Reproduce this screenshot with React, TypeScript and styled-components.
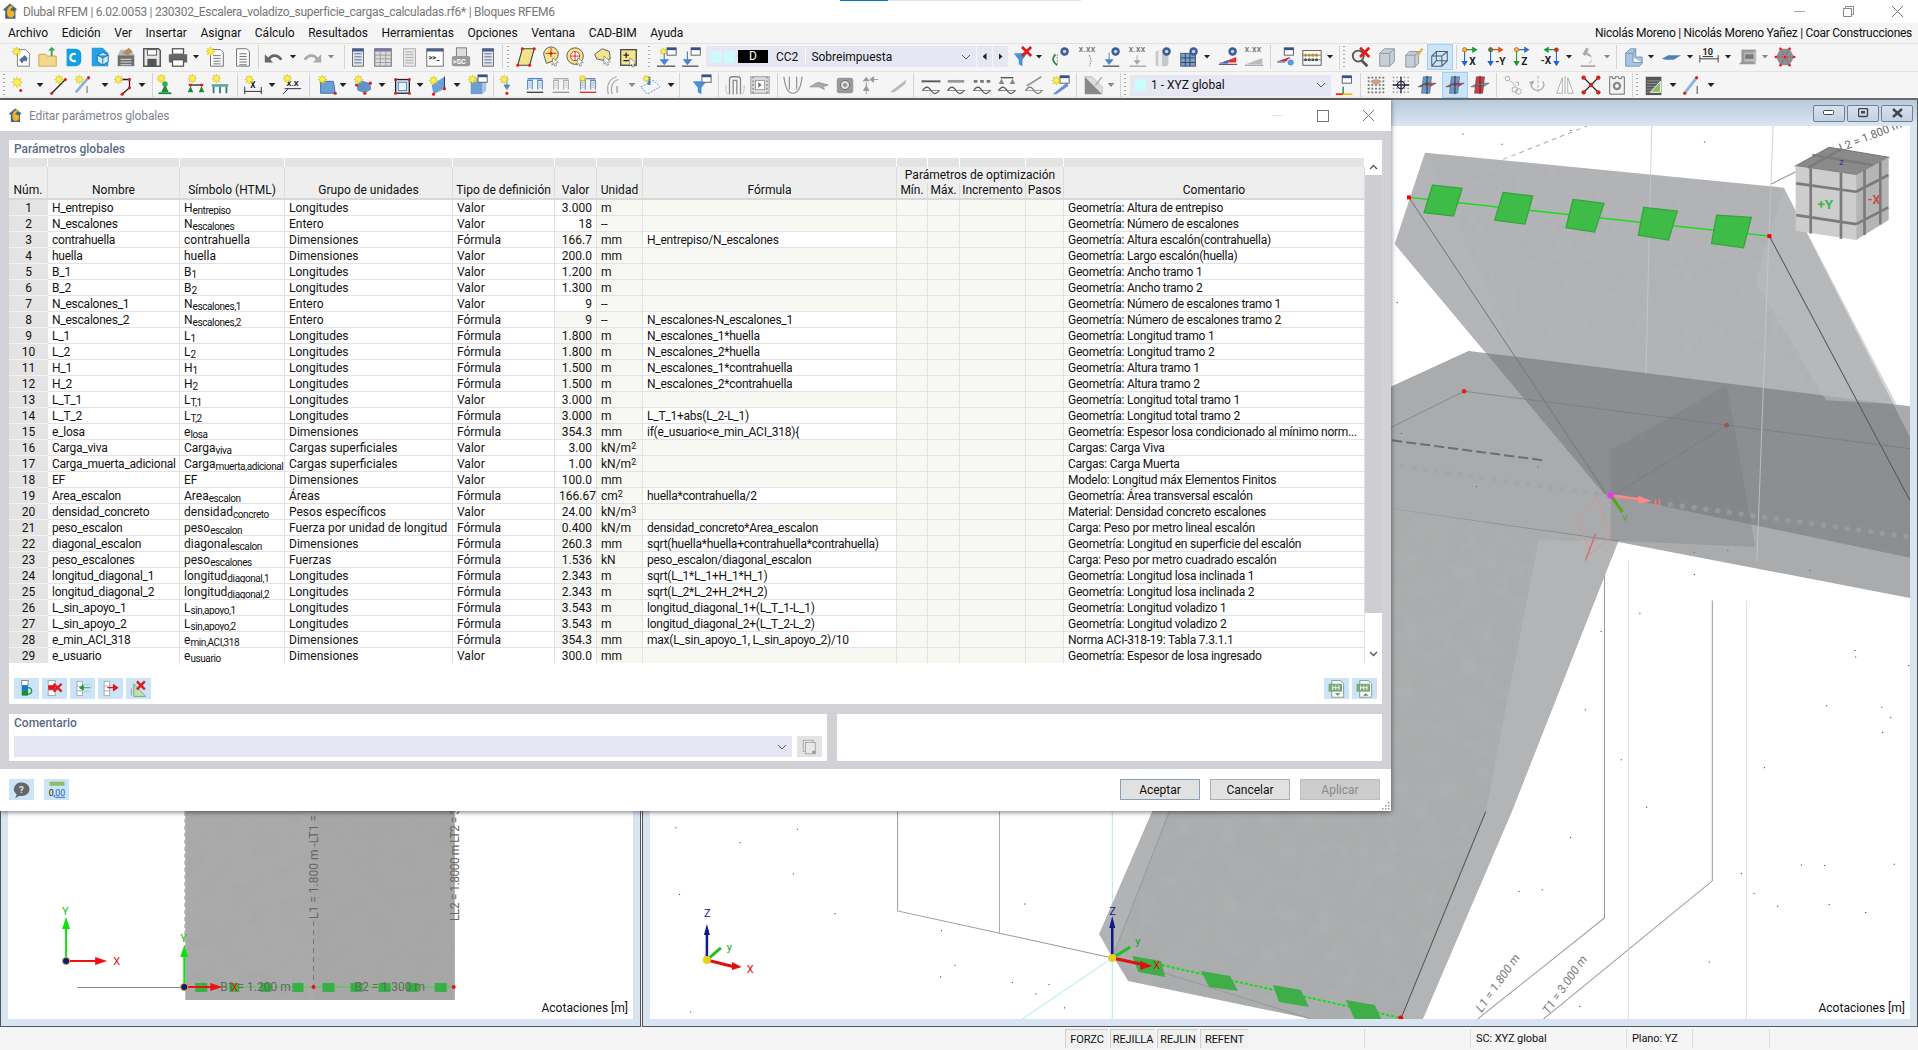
import React from "react";
import styled, { createGlobalStyle } from "styled-components";

const Global = createGlobalStyle`
  html, body { margin: 0; padding: 0; background: #fff; }
  body { font-family: Roboto, "Liberation Sans", sans-serif; font-size: 12px; color: #111; }
`;

const Burst = ({ x, y, r = 5 }: { x: number; y: number; r?: number }) => {
  const pts: string[] = [];
  for (let i = 0; i < 16; i++) {
    const a = (i * Math.PI) / 8;
    const q = i % 2 === 0 ? r : r * 0.5;
    pts.push(`${x + q * Math.cos(a)},${y + q * Math.sin(a)}`);
  }
  return <polygon points={pts.join(" ")} fill="#fff04a" stroke="#c9b200" strokeWidth=".5" />;
};
const Rd = ({ x, y, r = 1.7 }: { x: number; y: number; r?: number }) => <circle cx={x} cy={y} r={r} fill="#e21c1c" />;
const Lines = ({ x, y, w, n, c = "#777", d = 3 }: { x: number; y: number; w: number; n: number; c?: string; d?: number }) => (
  <>
    {Array.from({ length: n }, (_, i) => (
      <path key={i} d={`M${x} ${y + i * d + 0.5}h${w}`} stroke={c} />
    ))}
  </>
);
const Wave = ({ c = "#555" }: { c?: string }) => (
  <>
    <path d="M3 18c3-5 6-5 9 0s6 4 9 0" fill="none" stroke={c} strokeWidth="1.3" />
    <path d="M2 18h20" stroke={c} strokeWidth=".7" />
  </>
);
const Ax = ({ a, b, l }: { a: string; b: string; l: string }) => (
  <>
    <path d="M4 4h13M14 1.5l4 2.5-4 2.5z" stroke={a} fill={a} strokeWidth="1.2" />
    <path d="M5 4v16M2.5 17l2.5 4 2.5-4z" stroke={b} fill={b} strokeWidth="1.2" />
    <circle cx="5" cy="4" r="2.4" fill={a === "#e2541c" ? "#1e9a3c" : "#f0c020"} stroke="#c23" strokeWidth=".6" />
    <text x="10" y="21" fontSize="11" fontWeight="700" fontFamily="Roboto" fill="#222">{l}</text>
  </>
);
const Eye = () => (
  <>
    <circle cx="17" cy="6" r="4.6" fill="#3c5a94" />
    <circle cx="17" cy="6" r="2" fill="#bcd0f0" />
  </>
);
const XXX = () => <text x="2" y="7" fontSize="7.5" fontWeight="700" fontFamily="Roboto" letterSpacing=".4" fill="#777">X.XX</text>;
const Cross = ({ x = 17, y = 6 }: { x?: number; y?: number }) => (
  <path d={`M${x - 5} ${y - 5}l10 10M${x + 5} ${y - 5}l-10 10`} stroke="#e01b1b" strokeWidth="3" />
);
const WinMini = ({ x = 12, y = 2 }: { x?: number; y?: number }) => (
  <>
    <rect x={x} y={y} width="10" height="8" fill="#fff" stroke="#556" />
    <rect x={x} y={y} width="10" height="2.5" fill="#2f4f8f" />
  </>
);
const Funnel = ({ c = "#4a90d9" }: { c?: string }) => <path d="M3 8h15l-5.5 7v7l-4-2v-5z" fill={c} />;
const ColList = ({ c = "#4a6fa5", head = "#3f5f9a" }: { c?: string; head?: string }) => (
  <>
    <rect x="6" y="3" width="12" height="19" fill="#e4e4e4" stroke="#666" />
    <rect x="6" y="3" width="12" height="3" fill={head} />
    <Lines x={8} y={8} w={8} n={4} c={c} d={3.3} />
  </>
);
const Plane = ({ a, b, c }: { a: string; b: string; c: string }) => (
  <>
    <path d="M8 3h9l-1 9H7z" fill={a} stroke="#345" strokeWidth=".5" />
    <path d="M2 14l8-4h12l-7 4z" fill={b} stroke="#345" strokeWidth=".5" />
    <path d="M7 12h9l-1 9H6z" fill={c} stroke="#345" strokeWidth=".5" />
    <path d="M12 2v20" stroke="#233" />
  </>
);
const Frame = ({ c, d = "#444" }: { c: string; d?: string }) => (
  <>
    <path d="M4 17V7h5v10M15 17V7h5v10M4 5h16" stroke={c} fill="none" strokeWidth="1.2" />
    <path d="M3 20h18" stroke={d} strokeWidth="1.5" />
    <path d="M6.5 9v6M17.5 9v6" stroke={c} strokeDasharray="1.5 1" />
  </>
);

const icons: Record<string, React.ReactNode> = {
  newDoc: (<><path d="M7 4h9l4 4v14H7z" fill="#fff" stroke="#777" /><path d="M9 15l6-5 3 3-1 4-3-1-2 3z" fill="#4d6f9c" /><Burst x={6} y={6} /></>),
  folder: (<><path d="M2 9h7l2 2h10v11H2z" fill="#f3d98a" stroke="#c9a54a" /><path d="M15 11V5h-3l4-4 4 4h-3v6z" fill="#2fa84a" /></>),
  dblue: (<><path d="M5 3h10a6 6 0 0 1 6 6v7a6 6 0 0 1-6 6H5z" fill="#13a0e2" /><path d="M15 9a4 4 0 1 0 0 7" fill="none" stroke="#fff" strokeWidth="2.4" /></>),
  cubeDoc: (<><path d="M3 2h12l6 6v14H3z" fill="#26a2e4" /><path d="M9 10l6-3 6 3v7l-6 4-6-4z M9 10l6 3 6-3M15 13v8" fill="#cdeafa" stroke="#1a6da8" /></>),
  model: (<><rect x="3" y="10" width="18" height="12" fill="#6d6d6d" /><path d="M3 10l3-6h12l3 6z" fill="#b9b9b9" /><path d="M8 8l7-6 4 4-5 4z" fill="#b98a5a" /><Lines x={6} y={14} w={12} n={3} c="#eee" /></>),
  save: (<><path d="M3 3h16l2 2v17H3z" fill="#e8e8e8" stroke="#555" strokeWidth="1.6" /><rect x="7" y="4" width="10" height="6" fill="#fff" stroke="#555" /><rect x="7" y="14" width="10" height="8" fill="#555" /></>),
  print: (<><rect x="6" y="3" width="12" height="6" fill="#fff" stroke="#555" strokeWidth="1.4" /><rect x="2" y="9" width="20" height="9" fill="#666" /><rect x="6" y="15" width="12" height="7" fill="#fff" stroke="#555" strokeWidth="1.4" /></>),
  newList: (<><path d="M6 4h11l3 3v15H6z" fill="#fff" stroke="#666" /><Lines x={9} y={10} w={8} n={4} c="#666" /><Burst x={6} y={6} /></>),
  list: (<><path d="M5 3h11l3 3v16H5z" fill="#fff" stroke="#666" /><Lines x={8} y={8} w={8} n={5} c="#666" /></>),
  undo: (<><path d="M6 15c3-6 10-6 14 0" fill="none" stroke="#666" strokeWidth="3" /><path d="M2 9v9h9z" fill="#666" /></>),
  redo: (<><path d="M18 15c-3-6-10-6-14 0" fill="none" stroke="#aaa" strokeWidth="3" /><path d="M22 9v9h-9z" fill="#aaa" /></>),
  colList: <ColList />,
  table: (<><rect x="3" y="3" width="18" height="19" fill="#ddd" stroke="#666" /><rect x="3" y="3" width="18" height="3" fill="#77a" /><path d="M3 10h18M3 14h18M3 18h18M9 6v16M15 6v16" stroke="#999" /></>),
  grayList: (<><rect x="6" y="3" width="13" height="19" fill="#e8e8e8" stroke="#aaa" /><Lines x={8} y={6} w={9} n={5} c="#aaa" /></>),
  console: (<><rect x="3" y="3" width="18" height="19" fill="#fff" stroke="#666" /><rect x="3" y="3" width="18" height="3" fill="#46608f" /><text x="5" y="15" fontSize="8" fontWeight="700" fontFamily="Roboto" fill="#222">{">>_"}</text></>),
  sc: (<><rect x="7" y="2" width="11" height="10" fill="#ddd" stroke="#777" /><rect x="2" y="11" width="20" height="11" rx="2" fill="#999" /><text x="3" y="20" fontSize="8" fontWeight="700" fontFamily="Roboto" fill="#fff">{">SC"}</text></>),
  surfYellow: (<><path d="M8 3h13l-5 18H3z" fill="#f2e28a" stroke="#444" strokeWidth="1.2" /><Rd x={8} y={3} /><Rd x={21} y={3} /><Rd x={3} y={21} /><Rd x={16} y={21} /></>),
  target1: (<><path d="M4 9a8 8 0 1 1 8 8l-5 2z" fill="#f3e58e" stroke="#555" /><path d="M12 2v10M6 8h12" stroke="#e01b1b" /><Rd x={12} y={8} /><path d="M14 13l6 5-3 .5 1 3-2 .5-1-3-2 2z" fill="#fff" stroke="#555" strokeWidth=".6" /></>),
  target2: (<><circle cx="11" cy="11" r="9" fill="#f3e58e" stroke="#555" /><circle cx="11" cy="11" r="5" fill="#fff" stroke="#c33" /><path d="M11 6v10M6 11h10" stroke="#e01b1b" /><path d="M14 13l6 5-3 .5 1 3-2 .5-1-3-2 2z" fill="#fff" stroke="#555" strokeWidth=".6" /></>),
  blob: (<><path d="M3 9l8-6 8 3 1 8-6 2-9-2z" fill="#f3e58e" stroke="#555" /><path d="M13 11l7 6-3 .5 1 3-2 .5-1-3-2 2z" fill="#fff" stroke="#555" strokeWidth=".6" /></>),
  plusBox: (<><rect x="4" y="4" width="17" height="17" fill="#f3e58e" stroke="#444" strokeWidth="1.4" /><path d="M7 10h6M10 7v6M7 16h6" stroke="#222" strokeWidth="1.3" /><path d="M14 13l7 6-3 .5 1 3-2 .5-1-3-2 2z" fill="#fff" stroke="#555" strokeWidth=".6" /></>),
  loadNew: (<><path d="M9 6v13M5 15l4 5 4-5z" stroke="#4a86c8" fill="#4a86c8" strokeWidth="1.3" /><path d="M1 22h20" stroke="#444" strokeWidth="1.3" /><WinMini x={12} y={2} /><Burst x={8} y={6} r={4} /></>),
  loadWin: (<><path d="M7 6v13M3 15l4 5 4-5z" stroke="#4a86c8" fill="#4a86c8" strokeWidth="1.3" /><path d="M1 22h18" stroke="#444" strokeWidth="1.3" /><WinMini x={11} y={2} /></>),
  filterX: (<><Funnel /><Cross /></>),
  eyeC: (<><path d="M7 9c-4 5-3 9 2 12" fill="none" stroke="#2a8a50" strokeWidth="2" /><path d="M9 9v12" stroke="#888" strokeDasharray="2 1" /><Eye /></>),
  xxxC: (<><XXX /><path d="M13 10c3 4 3 8 0 12" fill="none" stroke="#999" strokeDasharray="2 1" strokeWidth="1.2" /></>),
  eyeLoad: (<><path d="M10 7v12M6 15l4 5 4-5z" stroke="#4a86c8" fill="#4a86c8" /><path d="M3 22h18" stroke="#444" strokeWidth="1.3" /><Eye /></>),
  xxxLoad: (<><XXX /><path d="M11 10v9M8 16l3 4 3-4z" stroke="#aaa" fill="#aaa" /><path d="M3 22h18" stroke="#999" strokeWidth="1.3" /></>),
  eyeCyl: (<><rect x="5" y="5" width="14" height="17" rx="3" fill="#c8c8c8" /><rect x="8" y="5" width="4" height="17" fill="#eee" /><Eye /></>),
  eyeTable: (<><rect x="3" y="8" width="16" height="14" fill="#7aa0cc" stroke="#456" /><path d="M3 13h16M3 18h16M8 8v14M13 8v14" stroke="#345" /><Eye /></>),
  eyeBar: (<><path d="M3 19l18-7v6H3z" fill="#d33" /><path d="M3 19l9-3.5v3.5z" fill="#36c" /><path d="M2 20h20" stroke="#333" /><Eye /></>),
  xxxBar: (<><XXX /><path d="M3 20l18-7v7z" fill="#bbb" /><path d="M2 21h20" stroke="#888" /></>),
  winGear: (<><path d="M1 17l14-5v5z" fill="#c33" /><path d="M1 17h9v1H1z" fill="#36c" /><WinMini x={9} y={2} /><circle cx="16" cy="18" r="4" fill="#5a9be0" stroke="#fff" /></>),
  abacus: (<><rect x="2" y="5" width="20" height="16" fill="#fff" stroke="#555" /><path d="M2 10h20M2 15h20" stroke="#777" />{[5, 9, 13, 17].map((x) => <circle key={x} cx={x} cy="10" r="1.7" fill="#c88a2a" />)}{[5, 9, 13, 17].map((x) => <circle key={x} cx={x} cy="15" r="1.7" fill="#456" />)}</>),
  zoomX: (<><circle cx="9" cy="11" r="6" fill="#eee" stroke="#555" strokeWidth="2" /><path d="M13 16l6 6" stroke="#555" strokeWidth="3" /><Cross x={16} y={7} /></>),
  box: (<path d="M4 8l5-5h11v14l-5 5H4zM4 8h11v14M15 8l5-5" fill="#c7ced8" stroke="#8b94a0" />),
  boxPen: (<><path d="M3 10l4-4h10v13l-4 4H3zM3 10h10v13M13 10l4-4" fill="#c7ced8" stroke="#8b94a0" /><path d="M15 10l5-8 2 1.5-5 8z" fill="#e8b24a" /></>),
  boxWire: (<path d="M3 11l5-5h12v10l-6 6H3zM3 11h11v11M14 11l6-5M8 6v10h12M3 22l5-6" fill="none" stroke="#4e5d6e" strokeWidth="1.1" />),
  axX: <Ax a="#1e9a3c" b="#2266cc" l="X" />,
  axY: <Ax a="#e2541c" b="#2266cc" l="-Y" />,
  axZ: <Ax a="#2f6fcc" b="#1e9a3c" l="Z" />,
  axNX: (<><path d="M20 4H7M10 1.5L6 4l4 2.5z" stroke="#1e9a3c" fill="#1e9a3c" strokeWidth="1.2" /><path d="M19 4v16M16.5 17l2.5 4 2.5-4z" stroke="#2266cc" fill="#2266cc" strokeWidth="1.2" /><circle cx="19" cy="4" r="2.5" fill="#c8321c" /><text x="2" y="20" fontSize="11" fontWeight="700" fontFamily="Roboto" fill="#222">-X</text></>),
  microscope: (<path d="M4 21h16v2H4zM12 19a6 6 0 0 0 2-10l-3-2 2-4-3-1-4 7 3 2 1-2 2 2a3 3 0 0 1 0 8z" fill="#aaa" />),
  solidL: (<path d="M4 8l5-5h6v9h7v7l-3 3H4zM4 8h8v10h10M12 8l3-5" fill="#a8c3e4" stroke="#7c93b0" />),
  plane: (<path d="M2 14l7-4h14l-8 5H6z" fill="#4c80b8" />),
  dim10: (<><text x="5" y="10" fontSize="10" fontWeight="700" fontFamily="Roboto" fill="#222" textDecoration="underline">10</text><path d="M2 14h20M2 10v8M22 10v8" stroke="#333" /></>),
  beam: (<><path d="M5 4h16v14H5z" fill="#bbb" /><path d="M5 4h16l-3 3H8v10h10l3 3H2l3-3z" fill="#999" /><rect x="9" y="9" width="9" height="5" fill="#777" /></>),
  mesh: (<><path d="M7 3l10 0 5 9-5 9H7l-5-9z" fill="#8b8f95" /><path d="M7 3l10 18M17 3L7 21M2 12h20" stroke="#c33" strokeDasharray="1.5 1.5" />{[[7, 3], [17, 3], [22, 12], [17, 21], [7, 21], [2, 12], [12, 12]].map(([x, y]) => <Rd key={`${x}${y}`} x={x} y={y} r={1.4} />)}</>),
  burstDot: (<><Burst x={11} y={9} r={6} /><Rd x={15} y={18} /></>),
  line: (<><path d="M4 21L19 6" stroke="#222" strokeWidth="1.5" /><Rd x={4} y={21} /><Rd x={19} y={6} /><Burst x={12} y={6} /></>),
  lineI: (<><path d="M3 20L17 4" stroke="#8cb4d8" strokeWidth="3" /><Burst x={7} y={6} /><Rd x={17} y={4} /><text x="14" y="21" fontSize="10" fontFamily="Roboto" fill="#555">I</text></>),
  polyline: (<><path d="M6 6h12v9l-8 7" fill="none" stroke="#222" strokeWidth="1.4" /><Rd x={18} y={6} /><Rd x={18} y={15} /><Rd x={10} y={22} /><Burst x={6} y={6} /></>),
  nodeGreen: (<><path d="M8 20l4-9 4 9z" fill="#1c8a3a" /><circle cx="12" cy="11" r="3" fill="#2db04f" /><Burst x={8} y={5} /><path d="M5 21h14" stroke="#1c8a3a" strokeWidth="2" /></>),
  supports: (<><path d="M4 12h16" stroke="#222" strokeWidth="1.4" /><path d="M6 13l-3 7h6zM18 13l-3 7h6z" fill="#1c8a3a" /><Rd x={6} y={12} /><Rd x={18} y={12} /><Burst x={8} y={5} /></>),
  bench: (<><path d="M3 11h18v3H3z" fill="#6aa6a0" /><path d="M5 14v7M19 14v7M12 14v7" stroke="#3a7e78" strokeWidth="2" /><Burst x={8} y={5} /></>),
  dimX: (<><path d="M3 22V14M21 22V14M3 19h18" stroke="#222" /><text x="9" y="15" fontSize="9" fontWeight="700" fontFamily="Roboto" fill="#222">X</text><Burst x={8} y={6} /></>),
  dimXX: (<><text x="6" y="13" fontSize="8.5" fontWeight="700" fontFamily="Roboto" fill="#222">X.X</text><path d="M2 22l6-6M4 16h18" stroke="#222" /><Burst x={7} y={5} /></>),
  surfBlue: (<><path d="M5 8h14l2 13H5z" fill="#6ca0d4" stroke="#47709c" /><Rd x={21} y={21} /><Burst x={7} y={6} /></>),
  solid: (<><path d="M5 12l6-5 9 3 1 7-7 4-8-3z" fill="#5f93c7" /><Rd x={5} y={12} /><Rd x={20} y={10} /><Rd x={14} y={21} /><Burst x={7} y={6} /></>),
  frameR: (<><rect x="5" y="6" width="15" height="15" fill="#cfe0f0" stroke="#222" strokeWidth="1.4" /><rect x="8" y="9" width="9" height="9" fill="#eef4fa" stroke="#4a86c8" /><Rd x={5} y={6} /><Rd x={20} y={6} /><Rd x={5} y={21} /><Rd x={20} y={21} /></>),
  wedge: (<><path d="M4 12l14-9v13L6 22z" fill="#6ca0d4" /><path d="M18 3v13" stroke="#234" /><Rd x={6} y={22} /><Rd x={18} y={16} /><Burst x={6} y={7} /></>),
  boxWin: (<><path d="M4 8h13v14H4z" fill="#6ca0d4" /><path d="M4 8l4-4h13l-4 4zM17 8l4-4v14l-4 4z" fill="#a8c6e4" /><WinMini x={12} y={1} /><Burst x={6} y={6} /></>),
  loadDot: (<><path d="M13 4v12M10 12l3 5 3-5z" fill="#4a86c8" stroke="#4a86c8" /><Rd x={13} y={21} /><Burst x={10} y={6} /></>),
  frameBlue: <Frame c="#4a86c8" />,
  frameGray: <Frame c="#aaa" d="#999" />,
  frameRed: (<><Frame c="#5b88b8" d="#d33" /><Burst x={6} y={5} r={4} /></>),
  arcI: (<><path d="M6 22C3 13 7 5 15 3M10 22C8 14 10 8 17 6" fill="none" stroke="#aaa" strokeWidth="1.4" /><text x="14" y="21" fontSize="10" fontFamily="Roboto" fill="#777">I</text></>),
  dashedBlue: (<><path d="M2 14l14-7 7 7-14 8z" fill="none" stroke="#3a8ee0" strokeDasharray="2 1.5" /><path d="M11 3v9" stroke="#4a86c8" strokeWidth="3" /><Burst x={8} y={5} r={4} /></>),
  filterWin: (<><Funnel /><WinMini x={13} y={1} /></>),
  archGray: (<><path d="M6 22V6a3 3 0 0 1 3-3h6a3 3 0 0 1 3 3v16M10 22V7h4v15" fill="none" stroke="#888" strokeWidth="1.4" /><path d="M2 12c0 5 0 8 2 10M22 12c0 5 0 8-2 10" fill="none" stroke="#bbb" /></>),
  film: (<><rect x="2" y="3" width="20" height="18" fill="#ddd" stroke="#999" /><rect x="7" y="7" width="10" height="10" fill="#fff" stroke="#999" /><path d="M10 9v6l4-3z" fill="#777" /><path d="M4.5 3v18M19.5 3v18" stroke="#999" strokeDasharray="2 2" strokeWidth="2" /></>),
  curve: (<path d="M2 3c2 14 5 18 10 18s8-4 10-18M8 3v14M16 3v14" fill="none" stroke="#888" strokeWidth="1.2" />),
  wing: (<path d="M2 14l9-5 11 3-6 2 2 3-6-3z" fill="#aaa" stroke="#999" />),
  cube3: (<><rect x="3" y="4" width="18" height="17" rx="3" fill="#999" /><circle cx="12" cy="12" r="5" fill="#ddd" stroke="#666" /><circle cx="12" cy="12" r="2" fill="#888" /></>),
  arrowsGray: (<><path d="M9 9V22M6 18l3-5 3 5z" stroke="#999" fill="#999" /><path d="M9 3l-4 5h8z" fill="#999" /><path d="M22 6H14M17 3l-4 3 4 3z" stroke="#999" fill="#999" /></>),
  slash: (<path d="M3 20L21 6l-1 5L8 20z" fill="#bbb" />),
  wave1: (<><path d="M3 8h18" stroke="#555" strokeWidth="2" /><circle cx="3" cy="8" r="1.5" fill="#777" /><circle cx="21" cy="8" r="1.5" fill="#777" /><Wave /></>),
  wave2: (<><path d="M3 8h18" stroke="#999" strokeWidth="3" /><Wave /></>),
  wave3: (<><path d="M3 8h4M10 8h4M17 8h4" stroke="#777" strokeWidth="3" /><Wave /></>),
  wave4: (<><path d="M5 4h14" stroke="#555" strokeWidth="1.5" /><path d="M6 5l-3 6h6zM18 5l-3 6h6z" fill="#888" /><Wave /></>),
  wave5: (<><path d="M4 13L20 3" stroke="#999" strokeWidth="2" /><Wave c="#777" /></>),
  waveStar: (<><path d="M4 22L20 9l1 4L8 22z" fill="#6a8be0" /><WinMini x={12} y={2} /><Burst x={8} y={7} /></>),
  cornerBox: (<><path d="M3 3v19h19z" fill="#888" /><path d="M3 3h8l11 11v8z" fill="#ddd" stroke="#bbb" /><path d="M14 12l7-9 1 1-7 9z" fill="#aaa" /></>),
  ucs: (<><path d="M10 14V22" stroke="#1a9a3a" strokeWidth="1.6" /><path d="M2 22h8" stroke="#e2301c" strokeWidth="2" /><path d="M10 22h10" stroke="#f0b000" strokeWidth="1.6" /><WinMini x={9} y={2} /></>),
  dots: (<>{[3, 7, 11, 15, 19].map((y) => [3, 7, 11, 15, 19].map((x) => <rect key={`${x}_${y}`} x={x} y={y} width="2" height="2" fill="#777" />))}<path d="M6 8c4-3 8-3 12 0-3 5-9 5-12 0z" fill="#c9a08a" /></>),
  crosshair: (<>{[3, 7, 11, 15, 19].map((y) => [3, 7, 11, 15, 19].map((x) => <rect key={`${x}_${y}`} x={x} y={y} width="1.6" height="1.6" fill="#999" />))}<circle cx="12" cy="12" r="4" fill="#fff" stroke="#224" strokeWidth="1.4" /><path d="M12 3v18M3 12h18" stroke="#224" strokeWidth="1.4" /></>),
  planeRed: <Plane a="#6c96c8" b="#d83a3a" c="#6c96c8" />,
  planeBlue: <Plane a="#d83a3a" b="#6c96c8" c="#d83a3a" />,
  link: (<><circle cx="6" cy="5" r="2.5" fill="none" stroke="#aaa" /><circle cx="18" cy="19" r="3" fill="none" stroke="#aaa" /><path d="M9 7l6 6M15 9h3v4" fill="none" stroke="#aaa" /><circle cx="14" cy="17" r="3" fill="none" stroke="#aaa" /></>),
  rotate: (<><path d="M12 2v20" stroke="#aaa" strokeDasharray="3 2" /><path d="M6 8a7 6 0 1 0 11 0" fill="none" stroke="#aaa" strokeWidth="1.4" /><path d="M2 9l4 3 2-5z" fill="#aaa" /></>),
  mirror: (<><path d="M12 2v20" stroke="#aaa" /><path d="M9 4L3 21h6zM15 4l6 17h-6z" fill="#fff" stroke="#aaa" /></>),
  xNodes: (<><path d="M4 4l16 16M20 4L4 20" stroke="#111" strokeWidth="1.4" />{[[4, 4], [20, 4], [4, 20], [20, 20], [12, 12]].map(([x, y]) => <Rd key={`${x}${y}`} x={x} y={y} r={2.4} />)}</>),
  gearDoc: (<><path d="M4 3h3v2h3V3h4v2h3V3h3v19H4z" fill="#f2f2f2" stroke="#666" /><circle cx="12" cy="13" r="4.6" fill="#888" /><circle cx="12" cy="13" r="2" fill="#fff" /></>),
  tableGreen: (<><rect x="3" y="3" width="17" height="20" fill="#555" /><Lines x={4} y={7} w={15} n={5} c="#999" /><path d="M8 20l11-12v12z" fill="#88c060" stroke="#fff" /></>),
  lineI2: (<><path d="M2 22L16 4" stroke="#8cb4d8" strokeWidth="3" /><Rd x={3} y={21} /><Rd x={16} y={4} /><text x="15" y="22" fontSize="11" fontFamily="Roboto" fill="#444">I</text></>),
  addRow: (<><rect x="6" y="2" width="8" height="6" fill="#fff" stroke="#777" /><rect x="6" y="8" width="8" height="6" fill="#1e78d2" /><rect x="6" y="14" width="8" height="7" fill="#1c8a3a" /><path d="M14 11c6 0 6 8 0 8" fill="none" stroke="#1c9a3c" strokeWidth="1.6" /></>),
  delRow: (<><rect x="4" y="2" width="9" height="6" fill="#fff" stroke="#999" /><rect x="4" y="8" width="9" height="6" fill="#e8101c" /><rect x="4" y="14" width="9" height="7" fill="#fff" stroke="#999" /><Cross x={16} y={11} /></>),
  moveIn: (<><path d="M5 3h7v18H5zM5 9h7M5 15h7" fill="#fff" stroke="#999" /><path d="M12 11h10M8 11l5-3v6z" stroke="#1c9a3c" fill="#1c9a3c" /><path d="M14 7h8M14 16h8" stroke="#9cc" /></>),
  moveOut: (<><path d="M4 3h7v18H4zM4 9h7M4 15h7" fill="#fff" stroke="#999" /><path d="M8 11h10M21 11l-5-3.5v7z" stroke="#e8101c" fill="#e8101c" strokeWidth="1.5" /></>),
  clearTri: (<><path d="M6 22V6l15 16z" fill="#bfe0b0" stroke="#6a9a6a" /><Cross x={15} y={8} /><path d="M3 12v9" stroke="#889" /></>),
  xlsDown: (<><path d="M6 2h11l4 4v17H6z" fill="#fff" stroke="#6a8a6a" /><rect x="2" y="6" width="17" height="10" fill="#7aa878" /><path d="M7 8v6M11 8v6M15 8v6M7 11h9" stroke="#fff" /><path d="M10 18h7l-3.5 3z" fill="#5a8a5a" /></>),
  xlsUp: (<><path d="M6 2h11l4 4v17H6z" fill="#fff" stroke="#6a8a6a" /><rect x="2" y="6" width="17" height="10" fill="#7aa878" /><path d="M7 8v6M11 8v6M15 8v6M7 11h9" stroke="#fff" /><path d="M10 21h7l-3.5-3z" fill="#5a8a5a" /></>),
  copyGray: (<><rect x="3" y="3" width="13" height="15" fill="#e8e8e8" stroke="#999" /><rect x="6" y="6" width="13" height="15" fill="#e8e8e8" stroke="#999" /><rect x="15" y="17" width="4" height="4" fill="#999" /></>),
  help: (<><path d="M12 2a10 9 0 0 1 0 18H8l-5 3 2-5a10 9 0 0 1 7-16z" fill="#666" /><text x="8" y="16" fontSize="13" fontWeight="700" fontFamily="Roboto" fill="#cce4f7">?</text></>),
  decimals: (<><rect x="3" y="2" width="18" height="5" fill="#8cc070" /><text x="2" y="19" fontSize="10.5" fontFamily="Roboto" fill="#222">0,</text><text x="10" y="19" fontSize="10.5" fontFamily="Roboto" fill="#2a60c8" textDecoration="underline">00</text></>),
  logo: (<><path d="M1 10L10 2l9 7-2 2v10H4V11z" fill="#41658f" /><path d="M14 4c-5 0-8 4-8 9 0 5 3 7 5 7s5-2 5-5-2-5-5-4c0-3 1-4 3-4z" fill="#f0b429" stroke="#8a6510" strokeWidth=".5" /></>),
};

const Svg = styled.svg<{ $s: number }>`
  width: ${(p) => p.$s}px;
  height: ${(p) => p.$s}px;
  display: block;
  flex: none;
`;
const Ico = ({ n, s = 22 }: { n: string; s?: number }) => (
  <Svg $s={s} viewBox="0 0 24 24" strokeWidth="1">
    {icons[n]}
  </Svg>
);

const Page = styled.div`
  width: 1918px;
  height: 1050px;
  overflow: hidden;
  display: flex;
  flex-direction: column;
  position: relative;
`;
const TitleBar = styled.header`
  height: 23px;
  flex: none;
  display: flex;
  align-items: center;
  padding-left: 2px;
  gap: 2px;
  font-size: 12px;
  letter-spacing: -0.28px;
  color: #767676;
  position: relative;
`;
const Progress = styled.div`
  position: absolute;
  top: 0;
  left: 840px;
  width: 241px;
  height: 1px;
  background: linear-gradient(90deg, #0078d7 0 48px, #e4e4e4 48px);
`;
const WinCtl = styled.div`
  margin-left: auto;
  display: flex;
  align-items: center;
  gap: 36px;
  padding-right: 14px;
`;
const MenuBar = styled.nav`
  height: 20px;
  flex: none;
  background: #f5f5f5;
  display: flex;
  align-items: center;
  gap: 13.5px;
  padding: 0 6px 0 8px;
`;
const MenuUser = styled.span`
  margin-left: auto;
  letter-spacing: -0.28px;
`;
const Bar = styled.div<{ $h: number }>`
  height: ${(p) => p.$h}px;
  flex: none;
  background: #f5f5f5;
  border-top: 1px solid #e2e2e2;
  padding-bottom: 2px;
  display: flex;
  align-items: center;
  box-sizing: border-box;
`;
const Bar2 = styled(Bar)`
  padding-bottom: 0;
  border-bottom: 2px solid #6a6a6a;
`;
const Tool = styled.div<{ $on?: boolean }>`
  width: 24px;
  height: 24px;
  box-sizing: border-box;
  display: flex;
  align-items: center;
  justify-content: center;
  ${(p) => p.$on && "background:#cce4f7;outline:1px solid #9fd0f5;"}
`;
const Drop = styled.div<{ $off?: boolean }>`
  width: 7px;
  height: 4px;
  background: ${(p) => (p.$off ? "#888" : "#222")};
  clip-path: polygon(0 0, 100% 0, 50% 100%);
`;
const Sep = styled.div`
  width: 1px;
  height: 24px;
  background: #d4d4d4;
`;
const Grip = styled.div`
  width: 2px;
  height: 22px;
  background: repeating-linear-gradient(#aaa 0 1px, transparent 1px 4px);
`;
const Combo = styled.div<{ $w: number }>`
  width: ${(p) => p.$w}px;
  height: 21px;
  background: #e6e7f2;
  display: flex;
  align-items: center;
  box-sizing: border-box;
  padding-left: 5px;
  gap: 2px;
`;
const Swatch = styled.span`
  width: 11px;
  height: 12px;
  background: #ccfbfd;
  flex: none;
`;
const LoadBadge = styled.span`
  width: 30px;
  height: 13px;
  background: #000;
  color: #fff;
  text-align: center;
  line-height: 13px;
  margin: 0 6px 0 1px;
  flex: none;
`;
const ComboSep = styled.span`
  width: 1px;
  height: 15px;
  background: #fff;
  margin: 0 3px 0 5px;
  flex: none;
`;
const ComboText = styled.span`
  margin-left: 3px;
`;
const Chevron = styled.svg`
  width: 10px;
  height: 6px;
  margin-left: auto;
  margin-right: 5px;
  flex: none;
`;
const Step = styled.div`
  width: 15px;
  height: 21px;
  background: #e6e7f2;
  display: flex;
  align-items: center;
  justify-content: center;
`;
const StepArrow = styled.span<{ $left?: boolean }>`
  width: 4px;
  height: 7px;
  background: #222;
  clip-path: ${(p) => (p.$left ? "polygon(100% 0, 100% 100%, 0 50%)" : "polygon(0 0, 100% 50%, 0 100%)")};
`;
const Slot = styled.div`
  flex: none;
`;

type Item = [number, string];
const widthOf = (k: string) =>
  k === "drop" || k === "dropg" ? 7 : k === "sep" ? 1 : k === "grip" ? 2 : k === "combo1" ? 270 : k === "combo2" ? 201 : k === "prev" || k === "next" ? 15 : 24;

const renderItem = (k: string) => {
  if (k === "drop") return <Drop />;
  if (k === "dropg") return <Drop $off />;
  if (k === "sep") return <Sep />;
  if (k === "grip") return <Grip />;
  if (k === "prev") return <Step><StepArrow $left /></Step>;
  if (k === "next") return <Step><StepArrow /></Step>;
  if (k === "combo1")
    return (
      <Combo $w={270}>
        <Swatch />
        <Swatch />
        <LoadBadge>D</LoadBadge>
        <span>CC2</span>
        <ComboSep />
        <span>Sobreimpuesta</span>
        <Chevron viewBox="0 0 10 6"><path d="M1 1l4 4 4-4" fill="none" stroke="#555" /></Chevron>
      </Combo>
    );
  if (k === "combo2")
    return (
      <Combo $w={201}>
        <Swatch />
        <ComboText>1 - XYZ global</ComboText>
        <Chevron viewBox="0 0 10 6"><path d="M1 1l4 4 4-4" fill="none" stroke="#555" /></Chevron>
      </Combo>
    );
  if (k.endsWith("!")) return <Tool $on><Ico n={k.slice(0, -1)} /></Tool>;
  return <Tool><Ico n={k} /></Tool>;
};

// items sit in flow, each one's gap is worked out from where its centre should land
const Strip = ({ items }: { items: Item[] }) => (
  <>
    {items.map(([c, k], i) => {
      const w = widthOf(k);
      const prev = i === 0 ? 0 : items[i - 1][0] + widthOf(items[i - 1][1]) / 2;
      return (
        <Slot key={i} style={{ marginLeft: c - w / 2 - prev }}>
          {renderItem(k)}
        </Slot>
      );
    })}
  </>
);

const bar1: Item[] = [
  [22, "newDoc"], [48, "folder"], [73, "dblue"], [100, "cubeDoc"], [126, "model"], [152, "save"], [178, "print"], [196, "drop"], [216, "newList"], [243, "list"], [258, "sep"],
  [274, "undo"], [293, "drop"], [312, "redo"], [331, "dropg"], [344, "sep"], [358, "colList"], [383, "table"], [409, "grayList"], [435, "console"], [461, "sc"], [488, "colList"], [502, "sep"], [508, "grip"],
  [526, "surfYellow"], [551, "target1"], [576, "target2"], [603, "blob"], [628, "plusBox"], [649, "grip"], [667, "loadNew"], [692, "loadWin"], [841, "combo1"], [984.5, "prev"], [1000.5, "next"],
  [1022, "filterX"], [1039, "drop"], [1060, "eyeC"], [1088, "xxxC"], [1111, "eyeLoad"], [1138, "xxxLoad"], [1162, "eyeCyl"], [1189, "eyeTable"], [1207, "drop"], [1228, "eyeBar"], [1254, "xxxBar"], [1270, "sep"],
  [1287, "winGear"], [1312, "abacus"], [1330, "drop"], [1339, "sep"], [1344, "grip"], [1361, "zoomX"], [1387, "box"], [1414, "boxPen"], [1440, "boxWire!"], [1456, "sep"],
  [1471, "axX"], [1497, "axY"], [1523, "axZ"], [1550, "axNX"], [1569, "drop"], [1588, "microscope"], [1607, "dropg"], [1616, "sep"], [1633, "solidL"], [1651, "drop"], [1671, "plane"], [1690, "drop"], [1709, "dim10"], [1728, "drop"], [1748, "beam"], [1765, "dropg"], [1785, "mesh"],
];
const bar2: Item[] = [
  [4, "grip"], [18, "burstDot"], [40, "drop"], [59, "line"], [84, "lineI"], [105, "drop"], [124, "polyline"], [142, "drop"], [152, "sep"], [165, "nodeGreen"], [196, "supports"], [220, "bench"], [237, "sep"],
  [253, "dimX"], [272, "drop"], [292, "dimXX"], [309, "sep"], [327, "surfBlue"], [343, "drop"], [363, "solid"], [382, "drop"], [402, "frameR"], [420, "drop"], [439, "wedge"], [457, "drop"], [478, "boxWin"], [493, "sep"],
  [506, "loadDot"], [535, "frameBlue"], [561, "frameGray"], [588, "frameRed"], [614, "arcI"], [632, "dropg"], [650, "dashedBlue"], [671, "drop"], [679, "sep"], [701, "filterWin"], [718, "sep"],
  [735, "archGray"], [760, "film"], [777, "sep"], [793, "curve"], [819, "wing"], [845, "cube3"], [869, "arrowsGray"], [898, "slash"], [913, "sep"],
  [931, "wave1"], [956, "wave2"], [982, "wave3"], [1007, "wave4"], [1034, "wave5"], [1060, "waveStar"], [1076, "sep"], [1093, "cornerBox"], [1111, "dropg"], [1120, "sep"], [1125, "grip"], [1230.5, "combo2"],
  [1345, "ucs"], [1360, "sep"], [1376, "dots"], [1401, "crosshair"], [1427, "planeRed"], [1455, "planeRed!"], [1480, "planeBlue"], [1496, "sep"], [1513, "link"], [1538, "rotate"], [1565, "mirror"], [1591, "xNodes"], [1617, "gearDoc"], [1632, "sep"], [1637, "grip"],
  [1654, "tableGreen"], [1673, "drop"], [1693, "lineI2"], [1711, "drop"],
];

const menus = ["Archivo", "Edición", "Ver", "Insertar", "Asignar", "Cálculo", "Resultados", "Herramientas", "Opciones", "Ventana", "CAD-BIM", "Ayuda"];

// ---- workspace ----
const Workspace = styled.main`
  flex: 1;
  min-height: 0;
  display: flex;
  gap: 1px;
  background: #f5f5f5;
`;
const Pane = styled.section<{ $w?: number }>`
  ${(p) => (p.$w ? `width:${p.$w}px;flex:none;` : "flex:1;min-width:0;")}
  box-sizing: border-box;
  display: flex;
  flex-direction: column;
  background: #d9e4f1;
  border: 1px solid #555;
  border-top: 0;
`;
const PaneTitle = styled.div`
  height: 26px;
  flex: none;
  background: linear-gradient(#b7c9db, #dbe6f2);
  display: flex;
  justify-content: flex-end;
  align-items: center;
  gap: 2px;
  padding-right: 4px;
`;
const PaneBtn = styled.button`
  width: 32px;
  height: 17px;
  padding: 0;
  border: 1px solid #6e7f96;
  border-radius: 2px;
  background: linear-gradient(#d8e2ee, #c3d1e0);
  display: flex;
  align-items: center;
  justify-content: center;
`;
const View = styled.div`
  flex: 1;
  min-height: 0;
  margin: 0 7px 7px;
  background: #fff;
  position: relative;
  overflow: hidden;
`;
const Scene = styled.svg`
  display: block;
  width: 100%;
  height: 100%;
`;
const ViewLabel = styled.span`
  position: absolute;
  right: 5px;
  bottom: 4px;
  font-size: 12px;
  color: #111;
`;

const StatusBar = styled.footer`
  height: 23px;
  flex: none;
  background: #f5f5f5;
  display: flex;
  align-items: center;
  padding-left: 1065px;
  font-size: 11px;
  letter-spacing: -0.1px;
`;
const StatusBtn = styled.span<{ $w: number }>`
  width: ${(p) => p.$w}px;
  height: 19px;
  box-sizing: border-box;
  margin-right: 2px;
  text-align: center;
  line-height: 19px;
  background: #f0f0f0;
  border-top: 1px solid #cfcfcf;
  border-left: 1px solid #cfcfcf;
  flex: none;
`;
const StatusGap = styled.span`
  width: 114px;
  flex: none;
`;
const StatusCell = styled.span<{ $w: number }>`
  width: ${(p) => p.$w}px;
  height: 19px;
  box-sizing: border-box;
  line-height: 19px;
  padding-left: 5px;
  border-left: 1px solid #dcdcdc;
  flex: none;
`;

const dots = (n: number, x0: number, y0: number, w: number, h: number, seed: number) => {
  const out: [number, number][] = [];
  let s = seed;
  for (let i = 0; i < n; i++) {
    s = (s * 16807) % 2147483647;
    const a = s / 2147483647;
    s = (s * 16807) % 2147483647;
    const b = s / 2147483647;
    out.push([x0 + a * w, y0 + b * h]);
  }
  return out;
};

const LeftScene = () => (
  <Scene viewBox="8 126 624 892" preserveAspectRatio="none">
    <defs>
      <filter id="grain1" x="0" y="0" width="100%" height="100%">
        <feTurbulence type="fractalNoise" baseFrequency=".06" numOctaves="3" seed="4" />
        <feColorMatrix values="0 0 0 0 .45  0 0 0 0 .45  0 0 0 0 .45  .5 0 0 0 -.12" />
        <feComposite in2="SourceGraphic" operator="in" />
        <feMerge><feMergeNode in="SourceGraphic" /><feMergeNode /></feMerge>
      </filter>
    </defs>
    <rect x="185" y="700" width="269" height="299" fill="#a8a8a8" filter="url(#grain1)" />
    <rect x="313" y="800" width="141" height="199" fill="#a4a4a4" opacity=".5" />
    <path d="M77 986.5H184" stroke="#888" />
    <path d="M313 920v65" stroke="#777" strokeDasharray="5 4" />
    <path d="M184.500 811v175" stroke="#888" strokeDasharray="4 3" opacity=".7" />
    <path d="M185 986H453" stroke="#22dd22" opacity=".7" />
    {[[195, 12], [229, 10], [260, 11], [292, 11], [322, 12], [350, 12], [378, 12], [406, 12], [434, 12]].map(([x, w]) => (
      <rect key={x} x={x} y="982" width={w} height="9" fill="#35b044" />
    ))}
    <g fontFamily="Roboto" fontSize="12" fill="#666">
      <text transform="translate(318 918) rotate(-90)">L1 = 1.800 m -LT1 = 3.000</text>
      <text transform="translate(458 920) rotate(-90)" letterSpacing="-.5">LL2 = 1.8000 m LT2 = 3.000</text>
      <text x="220" y="990">B1 = 1.200 m</text>
      <text x="354" y="990">B2 = 1.300 m</text>
    </g>
    <circle cx="313" cy="986" r="2" fill="#f01010" />
    <circle cx="453" cy="986" r="2" fill="#f01010" />
    <g strokeWidth="2">
      <path d="M66 960V924" stroke="#10e010" />
      <path d="M66 916l-4 12h8z" fill="#10e010" />
      <path d="M66 960h35" stroke="#f01010" />
      <path d="M107 960l-12-4v8z" fill="#f01010" />
      <circle cx="66" cy="960" r="3.500" fill="#101870" stroke="#c9a84a" strokeWidth="1" />
      <path d="M184 986V952" stroke="#10e010" />
      <path d="M184 944l-4 12h8z" fill="#10e010" />
      <path d="M184 986h32" stroke="#f01010" />
      <path d="M222 986l-12-4v8z" fill="#f01010" />
      <circle cx="184" cy="986" r="3.500" fill="#101870" stroke="#c9a84a" strokeWidth="1" />
    </g>
    <g fontFamily="Roboto" fontSize="11">
      <text x="62" y="914" fill="#10c010">Y</text>
      <text x="113" y="964" fill="#f01010">X</text>
      <text x="180" y="941" fill="#10c010">Y</text>
      <text x="231" y="990" fill="#f01010">X</text>
    </g>
  </Scene>
);

const RightScene = () => (
  <Scene viewBox="650 126 1262 892" preserveAspectRatio="none">
    <defs>
      <filter id="grain2" x="0" y="0" width="100%" height="100%">
        <feTurbulence type="fractalNoise" baseFrequency=".05" numOctaves="3" seed="9" />
        <feColorMatrix values="0 0 0 0 .5  0 0 0 0 .5  0 0 0 0 .5  .45 0 0 0 -.12" />
        <feComposite in2="SourceGraphic" operator="in" />
        <feMerge><feMergeNode in="SourceGraphic" /><feMergeNode /></feMerge>
      </filter>
    </defs>
    {dots(150, 650, 126, 1262, 892, 77).map(([x, y], i) => (
      <rect key={i} x={x} y={y} width="1" height="1" fill="#222" />
    ))}
    {/* guide lines behind the model */}
    <g stroke="#aaa" fill="none">
      <path d="M898 811v99l215 47" stroke="#999" />
      <path d="M1000 811v121" />
      <path d="M1606 560v357L1479 1018" stroke="#999" />
      <path d="M1714 600v280L1545 1018" stroke="#999" />
      <path d="M1630 560v458M1748 600v418" stroke="#ddd" />
      <path d="M1113 811v207" stroke="#a8e8ea" />
      <path d="M1023 1018L1113 957 1330 811" stroke="#b5eef0" />
    </g>
    {/* stem */}
    <polygon points="1300,500 1392,508 1620,540 1513,811 1424,1018 1312,1018 1129,980 1100,933 1153,811" fill="#a9abac" filter="url(#grain2)" />
    <polygon points="1540,540 1620,540 1513,811 1424,1018 1402,1018 1487,811" fill="#b3b4b5" />
    <polygon points="1153,811 1100,933 1113,957 1170,811" fill="#b2b3b4" />
    <path d="M1487 811L1402 1018" stroke="#555" />
    <path d="M1127 960L1312 1018" stroke="#999" />
    <path d="M1113 957L1170 811" stroke="#8b8b8b" opacity=".6" />
    {/* upper slab and the plane under it, drawn in the crop's own scale */}
    <g transform="translate(1390 100) scale(.3367 .3333)">
      <polygon points="108,158 1175,263 1590,1090 1590,1380 640,1180 18,432" fill="#b0b2b5" filter="url(#grain2)" />
      <polygon points="18,432 108,158 380,770 640,1180" fill="#b3b5b8" />
      <polygon points="238,752 1550,918 1590,930 1590,1500 660,1320 5,1225 5,860" fill="#74777a" opacity=".62" />
      <polygon points="5,860 238,752 420,1020 5,960" fill="#a9abad" />
      <polygon points="660,1050 1005,855 1090,1340 660,1320" fill="#6f7276" opacity=".25" />
      <polygon points="1175,263 1090,545 1300,900 1510,912" fill="#b9babd" opacity=".6" />
      <path d="M10 1020L460 1080" stroke="#555" strokeWidth="6" strokeDasharray="30 12" opacity=".7" />
      <path d="M60 292L650 1185" stroke="#7b7b7b" strokeWidth="3" fill="none" />
      <path d="M1132 408L1550 1200" stroke="#555" strokeWidth="3" fill="none" />
      <path d="M224 873L0 985M224 873L1550 1045M1005 975L660 1190" stroke="#777" strokeWidth="2" fill="none" />
      <path d="M1143 78L1095 1380M782 78L765 820" stroke="#c8c8c8" strokeWidth="3" opacity=".8" fill="none" />
      <path d="M340 178L590 78" stroke="#aaa" strokeWidth="3" strokeDasharray="14 12" fill="none" />
      <path d="M1138 252L1210 215" stroke="#999" strokeWidth="3" fill="none" />
      <path d="M615 1300L585 1380" stroke="#d66" strokeWidth="4" fill="none" />
      {Array.from({ length: 20 }, (_, i) => <circle key={i} cx={40 + i * 34} cy={1098 + i * 4.9} r={8} fill="#a2a4a6" opacity=".6" />)}
      {Array.from({ length: 21 }, (_, i) => <circle key={i} cx={838 + i * 35} cy={1212 + i * 4.8} r={8} fill="#a2a4a6" opacity=".6" />)}
      <path d="M60 292L1132 408" stroke="#10e010" strokeWidth="4" />
      {[
        "130,255 218,265 192,348 105,338",
        "340,277 428,288 405,372 315,360",
        "548,298 640,310 612,396 527,383",
        "758,322 858,333 832,420 742,405",
        "975,345 1078,352 1055,443 960,430",
      ].map((p) => <polygon key={p} points={p} fill="#3fbb48" stroke="#35a63e" strokeWidth="4" />)}
      <rect x="54" y="286" width="12" height="12" fill="#f00" />
      <rect x="1126" y="402" width="12" height="12" fill="#f00" />
      <circle cx="224" cy="873" r="7" fill="#e02020" />
      <circle cx="1005" cy="975" r="7" fill="#a85050" />
      <path d="M560 1260l60-70 40 120-60 50z" fill="none" stroke="#e88" strokeWidth="3" strokeDasharray="6 4" />
      <path d="M660 1185L755 1198" stroke="#f88" strokeWidth="8" />
      <path d="M782 1202l-40-16v24z" fill="#f88" />
      <path d="M660 1185L695 1235" stroke="#54a818" strokeWidth="9" />
      <circle cx="660" cy="1185" r="10" fill="#e040e0" />
      <text x="788" y="1216" fontSize="36" fontFamily="Roboto" fill="#f77">u</text>
      <text x="695" y="1262" fontSize="32" fontFamily="Roboto" fill="#54a818">v</text>
      <text transform="translate(1345 155) rotate(-22)" fontSize="34" fontFamily="Roboto" fill="#666">L2 = 1.800 m</text>
      {/* nav cube */}
      <polygon points="1210,198 1310,142 1487,172 1390,225" fill="#8a8a8a" stroke="#777" strokeWidth="3" />
      <polygon points="1210,198 1390,225 1390,420 1210,392" fill="#cdcdcd" />
      <polygon points="1390,225 1487,172 1487,360 1390,420" fill="#b5b5b5" />
      <path d="M1255 205v195M1345 218v198M1212 250l178 25M1212 345l178 27M1390 275l96-50M1390 372l96-50M1415 210v195M1462 185v188M1260 165l180 30M1345 148l-98 55" stroke="#7b7b7b" strokeWidth="8" fill="none" />
      <text x="1275" y="328" fontSize="40" fontWeight="700" fontFamily="Roboto" fill="#38b848">+Y</text>
      <text x="1425" y="312" fontSize="36" fontWeight="700" fontFamily="Roboto" fill="#c84a4a">-X</text>
      <text x="1340" y="196" fontSize="22" fontWeight="700" fontFamily="Roboto" fill="#334488">Z</text>
    </g>
    {/* model details under the dialog */}
    <path d="M1153 962L1402 1017" stroke="#10e010" strokeWidth="2" strokeDasharray="3 2" />
    {[
      "1133,955 1162,960 1166,976 1139,971",
      "1202,970 1231,975 1239,990 1210,986",
      "1274,984 1302,989 1310,1006 1280,1001",
      "1347,999 1376,1004 1383,1019 1356,1019",
    ].map((p) => <polygon key={p} points={p} fill="#3fae48" />)}
    <circle cx="1402" cy="1017" r="2.500" fill="#f00" />
    <g strokeWidth="2.500">
      <path d="M707 959V930" stroke="#101890" />
      <path d="M707 923l-3 11h6z" fill="#101890" />
      <path d="M707 959l14-12" stroke="#20c020" strokeWidth="3" />
      <path d="M707 959l28 7" stroke="#e01010" strokeWidth="3" />
      <path d="M742 966l-10-5v8z" fill="#e01010" />
      <circle cx="707" cy="959" r="4" fill="#e8d020" />
      <path d="M1113 957V925" stroke="#101890" />
      <path d="M1113 915l-3 12h6z" fill="#101890" />
      <path d="M1113 957l18-11" stroke="#20c020" strokeWidth="3" />
      <path d="M1113 957l33 7" stroke="#e01010" strokeWidth="3" />
      <path d="M1153 965l-12-5v9z" fill="#e01010" />
      <circle cx="1113" cy="957" r="4" fill="#e8d020" />
    </g>
    <g fontFamily="Roboto" fontSize="11">
      <text x="704" y="916" fill="#101890">Z</text>
      <text x="727" y="950" fill="#20a020">y</text>
      <text x="747" y="972" fill="#e01010">X</text>
      <text x="1110" y="914" fill="#101890">Z</text>
      <text x="1136" y="944" fill="#20a020">y</text>
      <text x="1154" y="968" fill="#e01010">X</text>
    </g>
    <g fontFamily="Roboto" fontSize="12" fontStyle="italic" fill="#777">
      <text transform="translate(1483 1012) rotate(-55)">L1 = 1.800 m</text>
      <text transform="translate(1550 1014) rotate(-55)">T1 = 3.000 m</text>
    </g>
  </Scene>
);

// ---- dialog ----
const Dialog = styled.div`
  position: absolute;
  left: 0;
  top: 100px;
  width: 1391px;
  height: 711px;
  background: #fff;
  box-shadow: 0 1px 5px rgba(0, 0, 0, 0.55);
  display: flex;
  flex-direction: column;
`;
const DlgHead = styled.div`
  height: 31px;
  flex: none;
  display: flex;
  align-items: center;
  padding-left: 8px;
  gap: 4px;
  color: #7f858f;
  letter-spacing: -0.12px;
`;
const DlgCtl = styled.div`
  margin-left: auto;
  display: flex;
  align-items: center;
  gap: 33px;
  padding-right: 16px;
`;
const DlgBody = styled.div`
  flex: 1;
  min-height: 0;
  background: #d1d1d6;
  padding: 9px 9px 8px;
  display: flex;
  flex-direction: column;
  gap: 10px;
`;
const MainPanel = styled.section`
  height: 564px;
  flex: none;
  background: #fff;
  display: flex;
  flex-direction: column;
`;
const PanelLabel = styled.div`
  height: 18px;
  line-height: 18px;
  flex: none;
  padding-left: 5px;
  font-weight: 500;
  color: #5b6b86;
`;
const TableWrap = styled.div`
  height: 505px;
  flex: none;
  display: flex;
  overflow: hidden;
`;
const Sheet = styled.table`
  width: 1356px;
  flex: none;
  table-layout: fixed;
  border-collapse: separate;
  border-spacing: 0;
  align-self: flex-start;
  th {
    font-weight: 400;
    padding: 0;
    background: #eeeeee;
    border-right: 1px solid #dcdcdc;
    vertical-align: bottom;
    text-align: center;
    height: 16px;
    line-height: 14px;
    white-space: nowrap;
  }
  td {
    height: 16px;
    box-sizing: border-box;
    padding: 0 4px;
    line-height: 14px;
    border-right: 1px solid #e2e2e2;
    border-bottom: 1px solid #e2e2e2;
    white-space: nowrap;
    overflow: hidden;
    font-size: 12px;
  }
  sub {
    font-size: 10px;
    vertical-align: -2px;
    line-height: 0;
    letter-spacing: -0.4px;
  }
  sup {
    font-size: 9px;
    vertical-align: 3px;
    line-height: 0;
  }
`;
const StripCell = styled.th`
  && {
    height: 9px;
    line-height: 0;
    background: #e4e4e4;
    border-right: 1px solid #fff;
  }
`;
const LastHead = styled.tr`
  th { height: 17px; border-bottom: 2px solid #d8d8d8; box-sizing: border-box; padding-bottom: 1px; }
`;
const HeadCell = styled.th`
  && { border-bottom: 2px solid #d8d8d8; padding-bottom: 1px; }
`;
const OptHead = styled.th`
  && { vertical-align: middle; border-bottom: 0; line-height: 16px; }
`;
const NumCell = styled.td`
  && {
    background: #e4e4e4;
    text-align: center;
    border-right: 0;
    border-bottom-color: #f2f2f2;
  }
`;
const Cell = styled.td<{ $tint?: boolean; $right?: boolean; $tight?: boolean }>`
  background: ${(p) => (p.$tint ? "#f7f8f3" : "#fff")};
  ${(p) => p.$right && "text-align:right;"}
  ${(p) => p.$tight && "letter-spacing:-0.24px;"}
`;
const ScrollTrack = styled.div`
  width: 17px;
  flex: none;
  height: 505px;
  background: #fff;
  display: flex;
  flex-direction: column;
  align-items: center;
  justify-content: space-between;
  position: relative;
`;
const ScrollThumb = styled.div`
  position: absolute;
  left: 0;
  top: 17px;
  width: 17px;
  height: 438px;
  background: #cdcdd2;
`;
const ScrollArrow = styled.svg`
  width: 9px;
  height: 6px;
  margin: 6px 0;
  position: relative;
  flex: none;
`;
const ActionBar = styled.div`
  flex: 1;
  display: flex;
  align-items: flex-start;
  padding: 15px 5px 0;
  gap: 3px;
`;
const ActionBtn = styled.button<{ $muted?: boolean }>`
  width: 25px;
  height: 21px;
  padding: 0;
  border: 0;
  background: ${(p) => (p.$muted ? "#e3e3e3" : "#cce4f7")};
  display: flex;
  align-items: center;
  justify-content: center;
  flex: none;
`;
const RightActions = styled.div`
  margin-left: auto;
  display: flex;
  gap: 3px;
`;
const BottomRow = styled.div`
  height: 47px;
  flex: none;
  display: flex;
  gap: 10px;
`;
const CommentPanel = styled.section`
  width: 818px;
  flex: none;
  background: #fff;
  padding: 0 5px;
  box-sizing: border-box;
`;
const CommentLabel = styled.div`
  height: 22px;
  line-height: 18px;
  font-weight: 500;
  color: #5b6b86;
`;
const CommentRow = styled.div`
  display: flex;
  gap: 5px;
`;
const CommentBox = styled.div`
  flex: 1;
  height: 21px;
  background: #e6e7f2;
  display: flex;
  align-items: center;
`;
const EmptyPanel = styled.section`
  flex: 1;
  background: #fff;
`;
const DlgFoot = styled.footer`
  height: 42px;
  flex: none;
  box-sizing: border-box;
  display: flex;
  align-items: flex-start;
  padding: 10px 11px 0 9px;
  gap: 10px;
  position: relative;
`;
const FootBtns = styled.div`
  margin-left: auto;
  display: flex;
  gap: 10px;
`;
const PushBtn = styled.button<{ $kind?: "main" | "off" }>`
  width: 80px;
  height: 21px;
  padding: 0;
  font: inherit;
  box-sizing: border-box;
  background: ${(p) => (p.$kind === "off" ? "#cccccc" : "#e1e1e1")};
  color: ${(p) => (p.$kind === "off" ? "#8a8a8a" : "#111")};
  border: 1px solid ${(p) => (p.$kind === "main" ? "#8aa0b6" : p.$kind === "off" ? "#bfbfbf" : "#adadad")};
`;
const ResizeGrip = styled.svg`
  position: absolute;
  right: 1px;
  bottom: 1px;
  width: 9px;
  height: 9px;
`;

type Row = { name: string; sym: React.ReactNode; group: string; type: string; val: string; unit: React.ReactNode; formula: string; note: string };

const raw = `H_entrepiso|H~entrepiso|Longitudes|Valor|3.000|m||Geometría: Altura de entrepiso
N_escalones|N~escalones|Entero|Valor|18|--||Geometría: Número de escalones
contrahuella|contrahuella|Dimensiones|Fórmula|166.7|mm|H_entrepiso/N_escalones|Geometría: Altura escalón(contrahuella)
huella|huella|Dimensiones|Valor|200.0|mm||Geometría: Largo escalón(huella)
B_1|B~1|Longitudes|Valor|1.200|m||Geometría: Ancho tramo 1
B_2|B~2|Longitudes|Valor|1.300|m||Geometría: Ancho tramo 2
N_escalones_1|N~escalones,1|Entero|Valor|9|--||Geometría: Número de escalones tramo 1
N_escalones_2|N~escalones,2|Entero|Fórmula|9|--|N_escalones-N_escalones_1|Geometría: Número de escalones tramo 2
L_1|L~1|Longitudes|Fórmula|1.800|m|N_escalones_1*huella|Geometría: Longitud tramo 1
L_2|L~2|Longitudes|Fórmula|1.800|m|N_escalones_2*huella|Geometría: Longitud tramo 2
H_1|H~1|Longitudes|Fórmula|1.500|m|N_escalones_1*contrahuella|Geometría: Altura tramo 1
H_2|H~2|Longitudes|Fórmula|1.500|m|N_escalones_2*contrahuella|Geometría: Altura tramo 2
L_T_1|L~T,1|Longitudes|Valor|3.000|m||Geometría: Longitud total tramo 1
L_T_2|L~T,2|Longitudes|Fórmula|3.000|m|L_T_1+abs(L_2-L_1)|Geometría: Longitud total tramo 2
e_losa|e~losa|Dimensiones|Fórmula|354.3|mm|if(e_usuario<e_min_ACI_318){|Geometría: Espesor losa condicionado al mínimo norm...
Carga_viva|Carga~viva|Cargas superficiales|Valor|3.00|kN/m^2||Cargas: Carga Viva
Carga_muerta_adicional|Carga~muerta,adicional|Cargas superficiales|Valor|1.00|kN/m^2||Cargas: Carga Muerta
EF|EF|Dimensiones|Valor|100.0|mm||Modelo: Longitud máx Elementos Finitos
Area_escalon|Area~escalon|Áreas|Fórmula|166.67|cm^2|huella*contrahuella/2|Geometría: Área transversal escalón
densidad_concreto|densidad~concreto|Pesos específicos|Valor|24.00|kN/m^3||Material: Densidad concreto escalones
peso_escalon|peso~escalon|Fuerza por unidad de longitud|Fórmula|0.400|kN/m|densidad_concreto*Area_escalon|Carga: Peso por metro lineal escalón
diagonal_escalon|diagonal~escalon|Dimensiones|Fórmula|260.3|mm|sqrt(huella*huella+contrahuella*contrahuella)|Geometría: Longitud en superficie del escalón
peso_escalones|peso~escalones|Fuerzas|Fórmula|1.536|kN|peso_escalon/diagonal_escalon|Carga: Peso por metro cuadrado escalón
longitud_diagonal_1|longitud~diagonal,1|Longitudes|Fórmula|2.343|m|sqrt(L_1*L_1+H_1*H_1)|Geometría: Longitud losa inclinada 1
longitud_diagonal_2|longitud~diagonal,2|Longitudes|Fórmula|2.343|m|sqrt(L_2*L_2+H_2*H_2)|Geometría: Longitud losa inclinada 2
L_sin_apoyo_1|L~sin,apoyo,1|Longitudes|Fórmula|3.543|m|longitud_diagonal_1+(L_T_1-L_1)|Geometría: Longitud voladizo 1
L_sin_apoyo_2|L~sin,apoyo,2|Longitudes|Fórmula|3.543|m|longitud_diagonal_2+(L_T_2-L_2)|Geometría: Longitud voladizo 2
e_min_ACI_318|e~min,ACI,318|Dimensiones|Fórmula|354.3|mm|max(L_sin_apoyo_1, L_sin_apoyo_2)/10|Norma ACI-318-19: Tabla 7.3.1.1
e_usuario|e~usuario|Dimensiones|Valor|300.0|mm||Geometría: Espesor de losa ingresado`;

const rows: Row[] = raw.split("\n").map((l) => {
  const [name, s, group, type, val, u, formula, note] = l.split("|");
  const [a, b] = s.split("~");
  const [ua, ub] = u.split("^");
  return {
    name,
    sym: <>{a}{b && <sub>{b}</sub>}</>,
    group,
    type,
    val,
    unit: <>{ua}{ub && <sup>{ub}</sup>}</>,
    formula,
    note,
  };
});

const colW = [39, 132, 105, 168, 102, 42, 46, 254, 31, 32, 66, 38, 301];

const Cross2 = () => (
  <svg width="13" height="13" viewBox="0 0 13 13"><path d="M1 1l11 11M12 1L1 12" stroke="#777" fill="none" /></svg>
);
const Restore = () => (
  <svg width="13" height="13" viewBox="0 0 13 13"><path d="M1.500 3.500h8v8h-8zM3.500 3.500v-2h8v8h-2" stroke="#888" fill="none" /></svg>
);
const Dash = ({ c = "#aaa" }: { c?: string }) => (
  <svg width="13" height="13" viewBox="0 0 13 13"><path d="M1 6.500h11" stroke={c} /></svg>
);
const Square = () => (
  <svg width="12" height="12" viewBox="0 0 12 12"><rect x=".5" y=".5" width="11" height="11" fill="none" stroke="#777" /></svg>
);

export default function App() {
  return (
    <Page>
      <Global />
      <TitleBar>
        <Ico n="logo" s={19} />
        <span>Dlubal RFEM | 6.02.0053 | 230302_Escalera_voladizo_superficie_cargas_calculadas.rf6* | Bloques RFEM6</span>
        <Progress />
        <WinCtl>
          <Dash />
          <Restore />
          <Cross2 />
        </WinCtl>
      </TitleBar>
      <MenuBar>
        {menus.map((m) => <span key={m}>{m}</span>)}
        <MenuUser>Nicolás Moreno | Nicolás Moreno Yañez | Coar Construcciones</MenuUser>
      </MenuBar>
      <Bar $h={28}><Strip items={bar1} /></Bar>
      <Bar2 $h={29}><Strip items={bar2} /></Bar2>
      <Workspace>
        <Pane $w={641}>
          <PaneTitle />
          <View>
            <LeftScene />
            <ViewLabel>Acotaciones [m]</ViewLabel>
          </View>
        </Pane>
        <Pane>
          <PaneTitle>
            <PaneBtn><svg width="12" height="6" viewBox="0 0 12 6"><rect x=".5" y=".5" width="10" height="4" rx="1" fill="#fff" stroke="#445" /></svg></PaneBtn>
            <PaneBtn><svg width="11" height="10" viewBox="0 0 11 10"><rect x=".5" y=".5" width="9" height="8" rx="1" fill="none" stroke="#445" strokeWidth="1.4" /><rect x="3" y="3" width="4" height="2.500" fill="#445" /></svg></PaneBtn>
            <PaneBtn><svg width="13" height="10" viewBox="0 0 13 10"><path d="M2 1l9 8M11 1L2 9" stroke="#445" strokeWidth="2.400" /></svg></PaneBtn>
          </PaneTitle>
          <View>
            <RightScene />
            <ViewLabel>Acotaciones [m]</ViewLabel>
          </View>
        </Pane>
      </Workspace>
      <StatusBar>
        <StatusBtn $w={43}>FORZC</StatusBtn>
        <StatusBtn $w={45}>REJILLA</StatusBtn>
        <StatusBtn $w={41}>REJLIN</StatusBtn>
        <StatusBtn $w={48}>REFENT</StatusBtn>
        <StatusGap />
        <StatusCell $w={106} />
        <StatusCell $w={156}>SC: XYZ global</StatusCell>
        <StatusCell $w={66}>Plano: YZ</StatusCell>
        <StatusCell $w={77} />
        <StatusCell $w={75} />
      </StatusBar>

      <Dialog>
        <DlgHead>
          <Ico n="logo" s={17} />
          <span>Editar parámetros globales</span>
          <DlgCtl>
            <Dash c="#e4e4e4" />
            <Square />
            <Cross2 />
          </DlgCtl>
        </DlgHead>
        <DlgBody>
          <MainPanel>
            <PanelLabel>Parámetros globales</PanelLabel>
            <TableWrap>
              <Sheet>
                <colgroup>
                  {colW.map((w, i) => <col key={i} style={{ width: w }} />)}
                </colgroup>
                <thead>
                  <tr>{colW.map((_, i) => <StripCell key={i} />)}</tr>
                  <tr>
                    <HeadCell rowSpan={2}>Núm.</HeadCell>
                    <HeadCell rowSpan={2}>Nombre</HeadCell>
                    <HeadCell rowSpan={2}>Símbolo (HTML)</HeadCell>
                    <HeadCell rowSpan={2}>Grupo de unidades</HeadCell>
                    <HeadCell rowSpan={2}>Tipo de definición</HeadCell>
                    <HeadCell rowSpan={2}>Valor</HeadCell>
                    <HeadCell rowSpan={2}>Unidad</HeadCell>
                    <HeadCell rowSpan={2}>Fórmula</HeadCell>
                    <OptHead colSpan={4}>Parámetros de optimización</OptHead>
                    <HeadCell rowSpan={2}>Comentario</HeadCell>
                  </tr>
                  <LastHead>
                    <th>Mín.</th>
                    <th>Máx.</th>
                    <th>Incremento</th>
                    <th>Pasos</th>
                  </LastHead>
                </thead>
                <tbody>
                  {rows.map((r, i) => (
                    <tr key={r.name}>
                      <NumCell>{i + 1}</NumCell>
                      <Cell $tight>{r.name}</Cell>
                      <Cell>{r.sym}</Cell>
                      <Cell>{r.group}</Cell>
                      <Cell>{r.type}</Cell>
                      <Cell $right $tint={r.type === "Fórmula"}>{r.val}</Cell>
                      <Cell $tint>{r.unit}</Cell>
                      <Cell $tight $tint={!r.formula}>{r.formula}</Cell>
                      <Cell $tint />
                      <Cell $tint />
                      <Cell $tint />
                      <Cell $tint />
                      <Cell $tight>{r.note}</Cell>
                    </tr>
                  ))}
                </tbody>
              </Sheet>
              <ScrollTrack>
                <ScrollThumb />
                <ScrollArrow viewBox="0 0 9 6"><path d="M1 5l3.500-3.500L8 5" fill="none" stroke="#555" strokeWidth="1.300" /></ScrollArrow>
                <ScrollArrow viewBox="0 0 9 6"><path d="M1 1l3.500 3.500L8 1" fill="none" stroke="#555" strokeWidth="1.300" /></ScrollArrow>
              </ScrollTrack>
            </TableWrap>
            <ActionBar>
              {["addRow", "delRow", "moveIn", "moveOut", "clearTri"].map((n) => (
                <ActionBtn key={n}><Ico n={n} s={19} /></ActionBtn>
              ))}
              <RightActions>
                <ActionBtn><Ico n="xlsDown" s={19} /></ActionBtn>
                <ActionBtn><Ico n="xlsUp" s={19} /></ActionBtn>
              </RightActions>
            </ActionBar>
          </MainPanel>
          <BottomRow>
            <CommentPanel>
              <CommentLabel>Comentario</CommentLabel>
              <CommentRow>
                <CommentBox>
                  <Chevron viewBox="0 0 10 6"><path d="M1 1l4 4 4-4" fill="none" stroke="#555" /></Chevron>
                </CommentBox>
                <ActionBtn $muted><Ico n="copyGray" s={18} /></ActionBtn>
              </CommentRow>
            </CommentPanel>
            <EmptyPanel />
          </BottomRow>
        </DlgBody>
        <DlgFoot>
          <ActionBtn><Ico n="help" s={18} /></ActionBtn>
          <ActionBtn><Ico n="decimals" s={20} /></ActionBtn>
          <FootBtns>
            <PushBtn $kind="main">Aceptar</PushBtn>
            <PushBtn>Cancelar</PushBtn>
            <PushBtn $kind="off">Aplicar</PushBtn>
          </FootBtns>
          <ResizeGrip viewBox="0 0 9 9">
            {[[7, 1], [4, 4], [7, 4], [1, 7], [4, 7], [7, 7]].map(([x, y]) => <rect key={`${x}${y}`} x={x} y={y} width="1.500" height="1.500" fill="#999" />)}
          </ResizeGrip>
        </DlgFoot>
      </Dialog>
    </Page>
  );
}
